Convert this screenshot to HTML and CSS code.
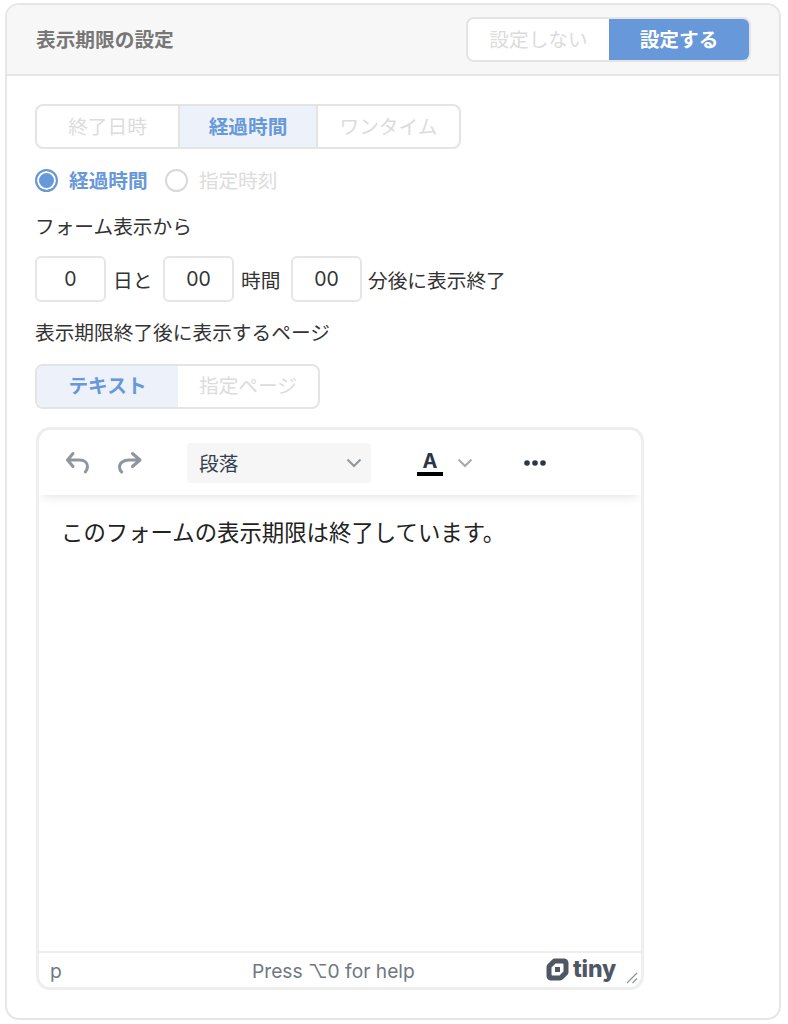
FILE: index.html
```html
<!DOCTYPE html>
<html lang="ja">
<head>
<meta charset="utf-8">
<title>表示期限の設定</title>
<link rel="stylesheet" href="styles.css">
</head>
<body>
<section class="card">
  <header class="card-head">
    <h2 class="card-title">表示期限の設定</h2>
    <div class="seg seg-onoff">
      <span class="seg-item off-item">設定しない</span>
      <span class="seg-item on-item">設定する</span>
    </div>
  </header>
  <div class="card-body">
    <div class="seg seg-type">
      <span class="seg-item type-a">終了日時</span>
      <span class="seg-item type-b active divided">経過時間</span>
      <span class="seg-item type-c">ワンタイム</span>
    </div>
    <div class="radios">
      <span class="radio radio-on"></span><span class="radio-label label-on">経過時間</span>
      <span class="radio radio-off"></span><span class="radio-label">指定時刻</span>
    </div>
    <p class="line line-from">フォーム表示から</p>
    <div class="times">
      <span class="num">0</span><span class="unit unit-day">日と</span>
      <span class="num">00</span><span class="unit unit-hour">時間</span>
      <span class="num">00</span><span class="unit unit-min">分後に表示終了</span>
    </div>
    <p class="line line-page">表示期限終了後に表示するページ</p>
    <div class="seg seg-page">
      <span class="seg-item page-a active">テキスト</span>
      <span class="seg-item page-b">指定ページ</span>
    </div>
    <div class="editor">
      <div class="toolbar">
        <svg class="tool-icon undo" viewBox="0 0 26 26" width="26" height="26" aria-hidden="true"><path d="M8 3.500 2.500 10 8 16.500M3 10H14.500c5 0 8 2.800 8 6.500 0 2-.7 3.800-2.200 5.500" fill="none" stroke="#8f969e" stroke-width="3" stroke-linecap="round" stroke-linejoin="round"/></svg>
        <svg class="tool-icon redo" viewBox="0 0 26 26" width="26" height="26" aria-hidden="true"><path d="M15.500 3.500 23 10 15.500 16.500M22.500 10H12C6.500 10 2.500 13 2.500 17c0 2 .7 3.800 2.200 5" fill="none" stroke="#8f969e" stroke-width="3" stroke-linecap="round" stroke-linejoin="round"/></svg>
        <div class="format">
          <span>段落</span>
          <svg viewBox="0 0 16 10" width="16" height="10" aria-hidden="true"><path d="M1.500 1.500 8 8l6.500-6.500" fill="none" stroke="#8f969e" stroke-width="2"/></svg>
        </div>
        <div class="color-btn">
          <span class="color-a">A</span>
          <span class="color-bar"></span>
        </div>
        <svg class="color-chev" viewBox="0 0 16 10" width="16" height="10" aria-hidden="true"><path d="M1.500 1.500 8 8l6.500-6.500" fill="none" stroke="#a4aab1" stroke-width="2"/></svg>
        <svg class="more" viewBox="0 0 24 6" width="24" height="6" aria-hidden="true"><circle cx="4" cy="3" r="2.800" fill="#2b3648"/><circle cx="12" cy="3" r="2.800" fill="#2b3648"/><circle cx="20" cy="3" r="2.800" fill="#2b3648"/></svg>
      </div>
      <div class="content">このフォームの表示期限は終了しています。</div>
      <div class="statusbar">
        <span class="path">p</span>
        <span class="help">Press ⌥0 for help</span>
        <span class="brand">
          <svg viewBox="0 0 23 23" width="23" height="23" aria-hidden="true"><path fill-rule="evenodd" d="M9 .5h9A4.500 4.500 0 0 1 22.500 5v9c0 1.200-.5 2.300-1.300 3.100l-4 4a4.500 4.500 0 0 1-3.200 1.400H5A4.500 4.500 0 0 1 .5 18V9c0-1.200.5-2.300 1.300-3.100l4-4A4.500 4.500 0 0 1 9 .5ZM9.500 5.500 7.500 7.500 5.500 9.500v7a1 1 0 0 0 1 1h7l4-4v-7a1 1 0 0 0-1-1ZM9 9h5v5H9Z" fill="#4e5864"/></svg>
          <span class="brand-word">tiny</span>
        </span>
        <svg class="grip" viewBox="0 0 12 12" width="12" height="12" aria-hidden="true"><path d="M1 11 11 1M6.500 11 11 6.500" stroke="#8f969e" stroke-width="1.300" fill="none"/></svg>
      </div>
    </div>
  </div>
</section>
</body>
</html>
```
FILE: styles.css
```css
* { box-sizing: border-box; }
html, body { margin: 0; padding: 0; background: #fff; }
body {
  width: 788px;
  height: 1024px;
  overflow: hidden;
  padding: 3px 7px 0 5px;
  font-family: "Noto Sans CJK JP", "Inter", sans-serif;
  font-size: 19.7px;
  color: #333;
}
.card {
  height: 1017px;
  border: 2px solid #e6e6e6;
  border-radius: 14px;
  overflow: hidden;
  background: #fff;
}
.card-head {
  height: 71px;
  background: #f7f7f7;
  border-bottom: 2px solid #e6e6e6;
  display: flex;
  align-items: center;
  justify-content: space-between;
  padding: 0 28px 1px 29px;
}
.card-title { margin: 0; font-size: 19.7px; font-weight: 700; color: #777; line-height: 26px; }
.seg {
  display: flex;
  border: 2px solid #e4e4e4;
  border-radius: 8px;
  overflow: hidden;
  background: #fff;
  height: 45px;
}
.seg-item {
  display: flex;
  align-items: center;
  justify-content: center;
  font-size: 19.7px;
  color: #dcdcdc;
  line-height: 1;
}
.seg-type .seg-item { padding-bottom: 1px; }
.seg-page .seg-item { padding-bottom: 3px; }
.seg-onoff { width: 285px; }
.off-item { width: 141px; }
.on-item { flex: 1; background: #6798d9; color: #fff; font-weight: 700; }
.card-body { padding: 28px 0 0 28px; }
.seg-type { width: 426px; }
.type-a { width: 141px; }
.type-b { width: 140px; }
.type-c { flex: 1; }
.active { background: #edf2fa; color: #6798d9; font-weight: 700; }
.divided { border-left: 2px solid #e4e4e4; border-right: 2px solid #e4e4e4; }
.radios { display: flex; align-items: center; height: 24px; margin-top: 19px; }
.radio { width: 23px; height: 23px; border-radius: 50%; flex: none; background: #fff; }
.radio-on { border: 2px solid #6798d9; box-shadow: inset 0 0 0 2px #fff; background: #6798d9; }
.radio-off { border: 2px solid #d9d9d9; margin-left: 17px; }
.radio-label { margin-left: 11px; color: #dcdcdc; font-size: 19.7px; line-height: 24px; }
.label-on { color: #6798d9; font-weight: 700; }
.line { margin: 0; font-size: 19.7px; line-height: 26px; color: #333; }
.line-from { margin-top: 21px; }
.times { display: flex; align-items: center; height: 46px; margin-top: 17px; }
.num {
  width: 71px;
  height: 46px;
  flex: none;
  border: 2px solid #e6e6e6;
  border-radius: 6px;
  display: flex;
  align-items: center;
  justify-content: center;
  font-family: "Inter", sans-serif;
  font-size: 19.5px;
  color: #333;
}
.unit { margin-left: 7px; font-size: 19.7px; color: #333; }
.unit-day { width: 50px; }
.unit-hour { width: 50px; }
.unit-min { margin-left: 6px; }
.line-page { margin-top: 17px; }
.seg-page { width: 285px; margin-top: 19px; }
.page-a { width: 141px; }
.page-b { flex: 1; }
.editor {
  width: 608px;
  height: 563px;
  margin: 18px 0 0 1px;
  border: 3px solid #eee;
  border-radius: 14px;
  overflow: hidden;
  display: flex;
  flex-direction: column;
}
.toolbar {
  height: 65px;
  flex: none;
  display: flex;
  align-items: center;
  padding: 0 0 0 26px;
  box-shadow: 0 4px 10px -3px rgba(40, 50, 60, .14);
  position: relative;
}
.tool-icon { flex: none; }
.redo { margin-left: 26px; }
.format {
  width: 184px;
  height: 40px;
  margin-left: 44px;
  background: #f6f6f6;
  border-radius: 4px;
  display: flex;
  align-items: center;
  justify-content: space-between;
  padding: 0 9px 0 12px;
  font-size: 19.7px;
  color: #333f4f;
}
.color-btn { width: 26px; margin-left: 46px; display: flex; flex-direction: column; align-items: center; padding-top: 2px; }
.color-a { font-family: "Inter", sans-serif; font-size: 20px; line-height: 20px; font-weight: 700; color: #2b3648; }
.color-bar { width: 26px; height: 4px; background: #000; margin-top: 1px; }
.color-chev { margin-left: 14px; }
.more { margin-left: 50px; }
.content {
  flex: 1;
  padding: 18px 0 0 22px;
  font-size: 22.4px;
  line-height: 36px;
  color: #222;
}
.statusbar {
  height: 36px;
  flex: none;
  border-top: 2px solid #eee;
  display: flex;
  align-items: center;
  position: relative;
  padding: 2px 0 0 11px;
  font-family: "Inter", sans-serif;
  font-size: 19.2px;
  color: #6f7882;
}
.help { position: absolute; left: 213px; top: 3px; line-height: 30px; }
.path { line-height: 30px; }
.brand { position: absolute; left: 507px; top: 4px; display: flex; align-items: center; gap: 4px; height: 24px; }
.brand-word { font-size: 23px; font-weight: 800; color: #4e5864; line-height: 22px; letter-spacing: -.2px; }
.grip { position: absolute; right: 3px; bottom: 3px; }
```
